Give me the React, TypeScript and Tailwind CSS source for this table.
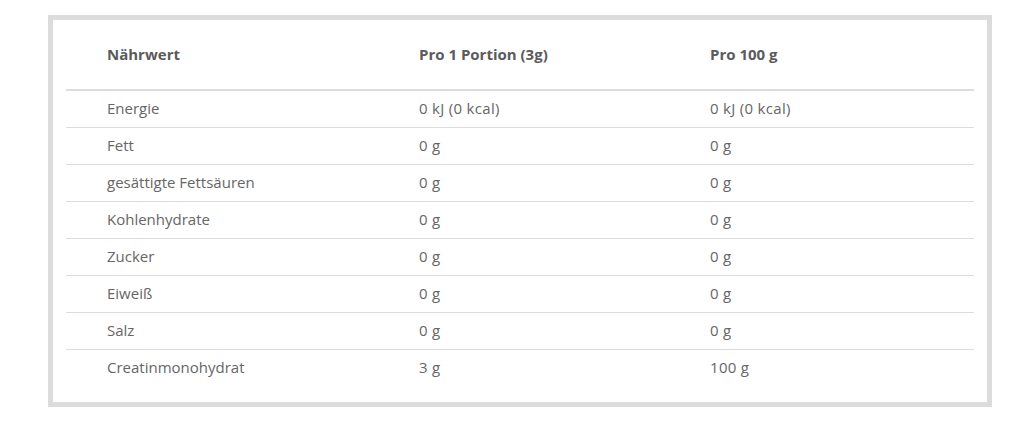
const rows = [
  ["Energie", "0 kJ (0 kcal)", "0 kJ (0 kcal)"],
  ["Fett", "0 g", "0 g"],
  ["gesättigte Fettsäuren", "0 g", "0 g"],
  ["Kohlenhydrate", "0 g", "0 g"],
  ["Zucker", "0 g", "0 g"],
  ["Eiweiß", "0 g", "0 g"],
  ["Salz", "0 g", "0 g"],
  ["Creatinmonohydrat", "3 g", "100 g"],
];

export default function App() {
  return (
    <div className="w-[1030px] h-[445px] bg-white pt-[15px] pl-[48px] font-['Open_Sans',sans-serif]">
      <div className="w-[944px] h-[392px] border-[5px] border-[#dcdcdc] px-[13px] pb-[16px]">
        <div className="grid grid-cols-[312px_291px_1fr] border-b-2 border-[#dcdcdc] pt-[24px] pb-[24px] text-[15px] leading-[21px] font-bold text-[#5b5b5b]">
          <div className="pl-[41px]">Nährwert</div>
          <div className="pl-[41px]">Pro 1 Portion (3g)</div>
          <div className="pl-[41px]">Pro 100 g</div>
        </div>
        {rows.map((r, i) => (
          <div
            key={i}
            className={`grid grid-cols-[312px_291px_1fr] h-[37px] items-center pb-[2px] text-[15px] text-[#666] ${
              i < rows.length - 1 ? "border-b border-[#dcdcdc]" : ""
            }`}
          >
            <div className="pl-[41px]">{r[0]}</div>
            <div className="pl-[41px] tracking-[0.3px]">{r[1]}</div>
            <div className="pl-[41px] tracking-[0.3px]">{r[2]}</div>
          </div>
        ))}
      </div>
    </div>
  );
}
